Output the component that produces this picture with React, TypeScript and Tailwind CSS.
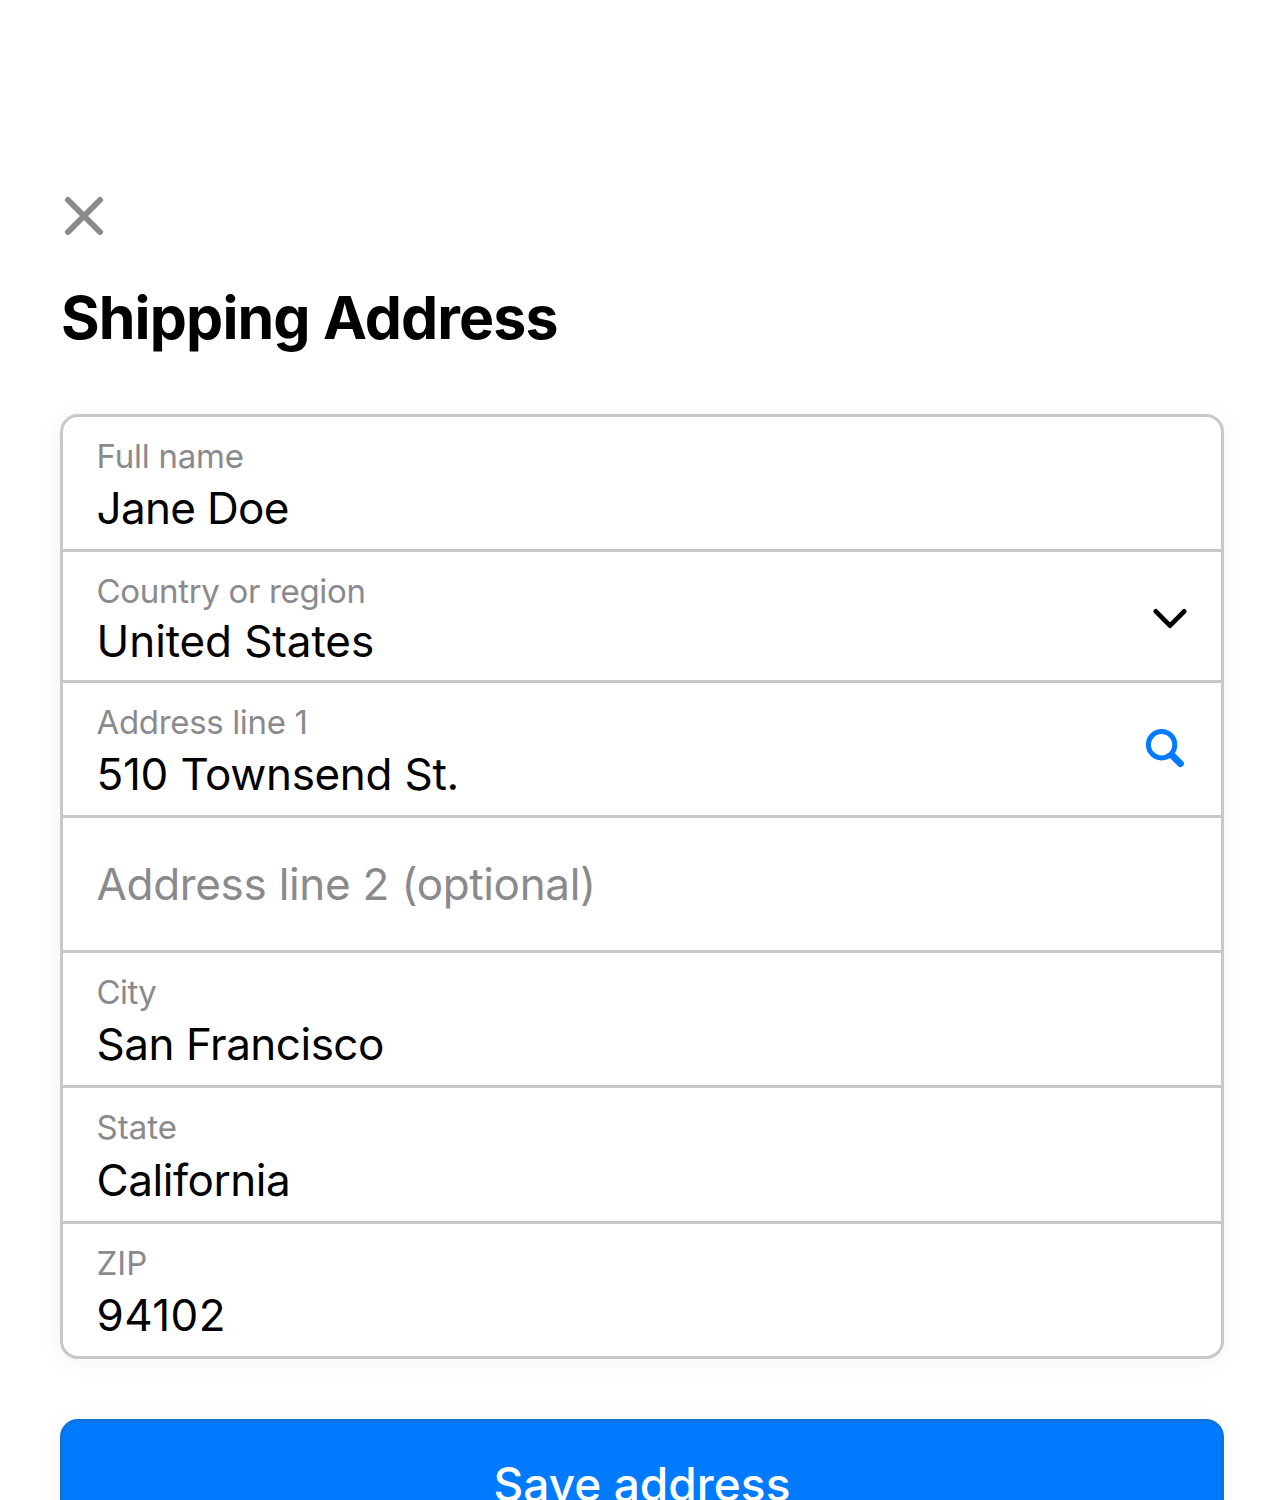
import React from "react";

type FieldProps = {
  label: string;
  value: string;
  height: string;
  labelClass?: string;
  valueClass?: string;
  icon?: React.ReactNode;
};

function Field({ label, value, height, labelClass = "", valueClass = "mt-[5px]", icon }: FieldProps) {
  return (
    <div className={`flex items-start justify-between border-b-[3px] border-[#c7c7cc] last:border-b-0 ${height}`}>
      <div className="pl-[33.6px] pt-[19px]">
        <div className={`h-[40px] whitespace-nowrap text-[33px] leading-[40px] text-[#8a8a8e] ${labelClass}`}>{label}</div>
        <div className={`h-[54px] whitespace-nowrap text-[44px] leading-[54px] text-black ${valueClass}`}>{value}</div>
      </div>
      {icon}
    </div>
  );
}

function ChevronIcon() {
  return (
    <svg className="mr-[27px] mt-[42px]" width="48" height="48" viewBox="0 0 48 48" fill="none" stroke="#000" strokeWidth="4.8" strokeLinecap="round" strokeLinejoin="round">
      <path d="M9.8 17.4L24 31.6L38.2 17.4" />
    </svg>
  );
}

function SearchIcon() {
  return (
    <svg className="mr-[32px] mt-[42px]" width="48" height="48" viewBox="0 0 48 48" fill="none" stroke="#007aff" strokeLinecap="round">
      <circle cx="20.6" cy="19.7" r="13.2" strokeWidth="5" />
      <path d="M31.2 30.4L39.4 38.6" strokeWidth="7" />
    </svg>
  );
}

export default function App() {
  return (
    <main className="h-[1500px] overflow-hidden bg-white px-[60px] pt-[196px] font-['Inter',sans-serif]">
      <button aria-label="Close" className="block h-[40px] w-[48px]">
        <svg width="48" height="40" viewBox="0 0 48 40" fill="none" stroke="#8a8a8e" strokeWidth="6" strokeLinecap="round">
          <path d="M8 4l32 32M40 4L8 36" />
        </svg>
      </button>
      <h1 className="mt-[45px] h-[74px] whitespace-nowrap pl-px text-[59px] font-bold leading-[74px] tracking-[-0.87px] text-black">Shipping Address</h1>
      <section className="mt-[59px] h-[945px] rounded-[18px] border-[3px] border-[#c7c7cc] shadow-[0_3px_24px_rgba(0,0,0,0.05)]">
        <Field label="Full name" value="Jane Doe" height="h-[135px]" labelClass="tracking-[-0.25px]" valueClass="mt-[5px] tracking-[-0.7px]" />
        <Field label="Country or region" value="United States" height="h-[131px]" labelClass="tracking-[-0.33px]" valueClass="mt-[3px] tracking-[-0.1px]" icon={<ChevronIcon />} />
        <Field label="Address line 1" value="510 Townsend St." height="h-[135px]" labelClass="tracking-[-0.35px]" valueClass="mt-[5px] tracking-[-0.35px] [word-spacing:0.5px]" icon={<SearchIcon />} />
        <div className="flex h-[135px] items-center whitespace-nowrap border-b-[3px] border-[#c7c7cc] pl-[33.6px] text-[44px] tracking-[-0.36px] text-[#8a8a8e] [word-spacing:0.4px]">Address line 2 (optional)</div>
        <Field label="City" value="San Francisco" height="h-[135px]" labelClass="tracking-[-0.6px]" valueClass="mt-[5px] tracking-[-0.5px]" />
        <Field label="State" value="California" height="h-[136px]" valueClass="mt-[6px] tracking-[-0.45px]" />
        <Field label="ZIP" value="94102" height="h-[132px]" valueClass="mt-[5px] tracking-[0.4px]" />
      </section>
      <button className="mt-[60px] flex h-[132px] w-full justify-center whitespace-nowrap rounded-[18px] border-[3px] border-[#0d72de] bg-[#007aff] pt-[33px] text-[46px] font-medium leading-[58px] tracking-[0.05px] text-white shadow-[0_3px_24px_rgba(0,0,0,0.05)]">Save address</button>
    </main>
  );
}
